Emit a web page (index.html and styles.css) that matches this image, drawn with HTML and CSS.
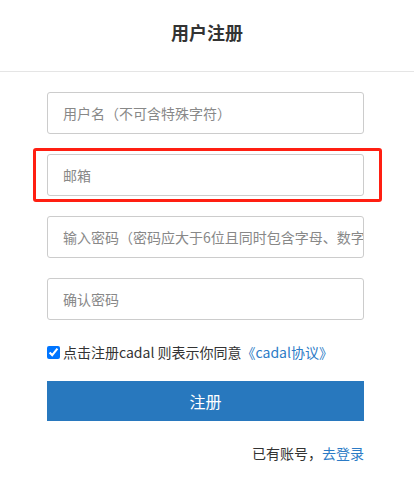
FILE: index.html
```html
<!DOCTYPE html>
<html lang="zh-CN">
<head>
<meta charset="utf-8">
<title>用户注册</title>
<link rel="stylesheet" href="styles.css">
</head>
<body>
<header class="header"><h1 class="title">用户注册</h1></header>
<form class="form">
  <input class="field" type="text" placeholder="用户名（不可含特殊字符）">
  <div class="highlight"><input class="field" type="text" placeholder="邮箱"></div>
  <input class="field" type="password" placeholder="输入密码（密码应大于6位且同时包含字母、数字">
  <input class="field" type="password" placeholder="确认密码">
  <label class="agree"><input class="check" type="checkbox" checked><span>点击注册cadal 则表示你同意<a class="link" href="#">《cadal协议》</a></span></label>
  <button class="submit" type="button">注册</button>
  <p class="login">已有账号，<a class="link" href="#">去登录</a></p>
</form>
</body>
</html>
```
FILE: styles.css
```css
* { box-sizing: border-box; }
html, body { margin: 0; padding: 0; background: #fff; }
body { font-family: "Noto Sans CJK SC", "Noto Sans", sans-serif; color: #333; }
.header { height: 72px; border-bottom: 1px solid #e5e5e5; padding-top: 20px; }
.title { margin: 0; text-align: center; font-size: 18px; line-height: 24px; font-weight: bold; color: #333; }
.form { width: 317px; margin: 20px 0 0 47px; display: flex; flex-direction: column; gap: 20px; }
.field { display: block; width: 100%; height: 42px; border: 1px solid #ccc; border-radius: 3px; padding: 0 0 0 15px; font-family: inherit; font-size: 14px; color: #333; outline: none; }
.field::placeholder { color: #888; }
.highlight { position: relative; }
.highlight::after { content: ""; position: absolute; left: -14px; right: -18px; top: -6px; bottom: -6px; border: 3px solid #ff1f12; border-radius: 3px; pointer-events: none; }
.agree { display: flex; align-items: center; font-size: 14px; line-height: 20px; margin-top: 2px; color: #333; }
.check { width: 13px; height: 13px; margin: 0 3px 0 0; }
.link { color: #2c7bc6; text-decoration: none; }
.submit { height: 40px; border: 0; border-radius: 0; background: #2878be; color: #fff; font-family: inherit; font-size: 16px; margin-top: -1px; }
.login { margin: 2px 0 0; text-align: right; font-size: 14px; line-height: 20px; }
```
